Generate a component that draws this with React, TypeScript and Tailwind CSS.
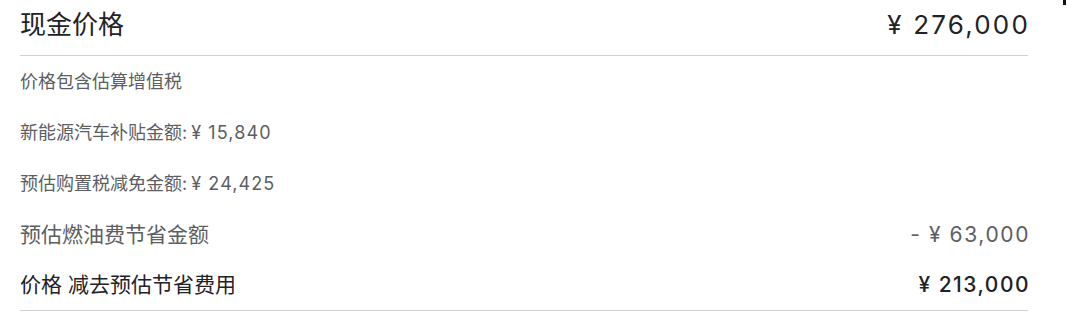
import React from "react";

const font = {
  fontFamily:
    '"Inter", "Noto Sans CJK SC", sans-serif',
};

export default function App() {
  return (
    <div className="relative w-[1067px] h-[315px] bg-white overflow-hidden" style={font}>
      <div className="absolute right-[1px] top-0 w-[3px] h-[5px] bg-[#111]" />
      <div className="ml-[20px] w-[1008px]">
        <div className="box-border h-[56px] pb-[7px] border-b border-[#d0d1d2] flex items-center justify-between">
          <span className="text-[26px] text-[#1f2226]">现金价格</span>
          <span className="text-[26px] text-[#1f2226] tracking-[2.2px] -mr-[2px]">¥ 276,000</span>
        </div>
        <div className="h-[51px] flex items-center text-[18px] text-[#5c5e62]">价格包含估算增值税</div>
        <div className="h-[51px] flex items-center text-[18px] text-[#5c5e62]">
          新能源汽车补贴金额: <span className="ml-[4px] tracking-[1.1px]">¥ 15,840</span>
        </div>
        <div className="h-[51px] flex items-center text-[18px] text-[#5c5e62]">
          预估购置税减免金额: <span className="ml-[4px] tracking-[1.1px]">¥ 24,425</span>
        </div>
        <div className="h-[51px] flex items-center justify-between text-[21px] text-[#5c5e62]">
          <span>预估燃油费节省金额</span>
          <span className="tracking-[1.6px] -mr-[2px]">- ¥ 63,000</span>
        </div>
        <div className="box-border h-[51px] border-b border-[#d0d1d2] flex items-center justify-between text-[21px] text-[#1f2226]">
          <span>价格 减去预估节省费用</span>
          <span className="font-medium tracking-[1.5px] -mr-[2px]">¥ 213,000</span>
        </div>
      </div>
    </div>
  );
}
